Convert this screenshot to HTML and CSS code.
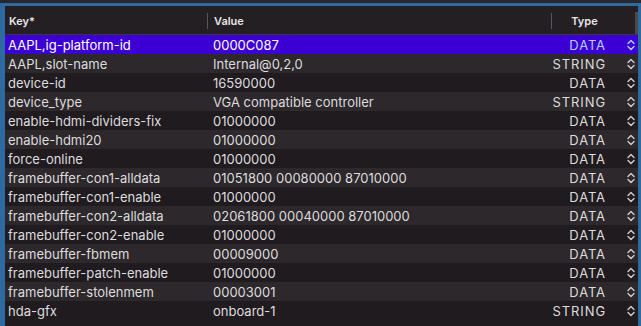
FILE: index.html
```html
<!DOCTYPE html>
<html>
<head>
<meta charset="utf-8">
<link rel="stylesheet" href="styles.css">
</head>
<body>
<div class="frame">
  <div class="table">
    <div class="head">
      <div class="hcell key">Key*</div>
      <div class="hcell val"><span class="sep"></span>Value</div>
      <div class="hcell type"><span class="sep"></span>Type</div>
      <div class="scroll"></div>
    </div>
    <div class="rows" id="rows"></div>
  </div>
</div>
<script src="app.js"></script>
</body>
</html>
```
FILE: styles.css
```css
html, body { margin: 0; padding: 0; }
body { width: 641px; height: 326px; background: #2a272d; overflow: hidden;
  font-family: Inter, "Noto Sans", "Liberation Sans", sans-serif; }
.frame { margin-top: 3px; height: 323px; border-top: 3px solid #2c6aa0; border-left: 5px solid #2c6aa0;
  border-right: 3px solid #2c6aa0; box-sizing: border-box; background: #1f1b1e; }
.table { width: 633px; }
.head { display: flex; height: 28px; align-items: center; background: #231f22; border-bottom: 1px solid #3a3639;
  color: #e8e6e8; font-size: 11px; font-weight: 600; position: relative; }
.hcell { position: relative; height: 100%; display: flex; align-items: center; box-sizing: border-box; padding-top: 2px; }
.key { width: 202px; padding-left: 4px; }
.val { width: 344px; padding-left: 7px; }
.type { width: 87px; justify-content: center; padding-right: 20px; }
.sep { position: absolute; left: 0; top: 7px; height: 16px; width: 1px; background: #5a5659; }
.scroll { position: absolute; right: 0; top: 6px; width: 3px; height: 22px; background: #4a474a; }
.rows { display: flex; flex-direction: column; }
.row { display: flex; height: 19px; align-items: center; font-size: 13px; color: #dedcde; }
.row:nth-child(even) { background: #2c282b; }
.row:nth-child(odd) { background: #1f1b1e; }
.row.sel { background: #3c00d4; color: #ffffff; }
.row.sel .c3, .row.sel .chev { color: #b4d0ff; }
.c1 { width: 202px; padding-left: 3px; box-sizing: border-box; white-space: nowrap; }
.c2 { width: 344px; padding-left: 6px; box-sizing: border-box; white-space: nowrap; }
.c3 { width: 55px; text-align: right; letter-spacing: 0.9px; }
.chev { padding-left: 21px; display: flex; color: #d0ced0; }
.chev svg { display: block; }
```
FILE: app.js
```js
const data = [
 ["AAPL,ig-platform-id","0000C087","DATA"],
 ["AAPL,slot-name","Internal@0,2,0","STRING"],
 ["device-id","16590000","DATA"],
 ["device_type","VGA compatible controller","STRING"],
 ["enable-hdmi-dividers-fix","01000000","DATA"],
 ["enable-hdmi20","01000000","DATA"],
 ["force-online","01000000","DATA"],
 ["framebuffer-con1-alldata","01051800 00080000 87010000","DATA"],
 ["framebuffer-con1-enable","01000000","DATA"],
 ["framebuffer-con2-alldata","02061800 00040000 87010000","DATA"],
 ["framebuffer-con2-enable","01000000","DATA"],
 ["framebuffer-fbmem","00009000","DATA"],
 ["framebuffer-patch-enable","01000000","DATA"],
 ["framebuffer-stolenmem","00003001","DATA"],
 ["hda-gfx","onboard-1","STRING"]
];
const rows = document.getElementById('rows');
const chev = '<svg width="8" height="12" viewBox="0 0 8 12"><path d="M1 4.5 L4 1.5 L7 4.5 M1 7.5 L4 10.5 L7 7.5" fill="none" stroke="currentColor" stroke-width="1.4" stroke-linecap="round" stroke-linejoin="round"/></svg>';
data.forEach((d, i) => {
  const r = document.createElement('div');
  r.className = 'row' + (i === 0 ? ' sel' : '');
  r.innerHTML = `<div class="c1">${d[0]}</div><div class="c2">${d[1]}</div><div class="c3">${d[2]}</div><div class="chev">${chev}</div>`;
  rows.appendChild(r);
});
```
